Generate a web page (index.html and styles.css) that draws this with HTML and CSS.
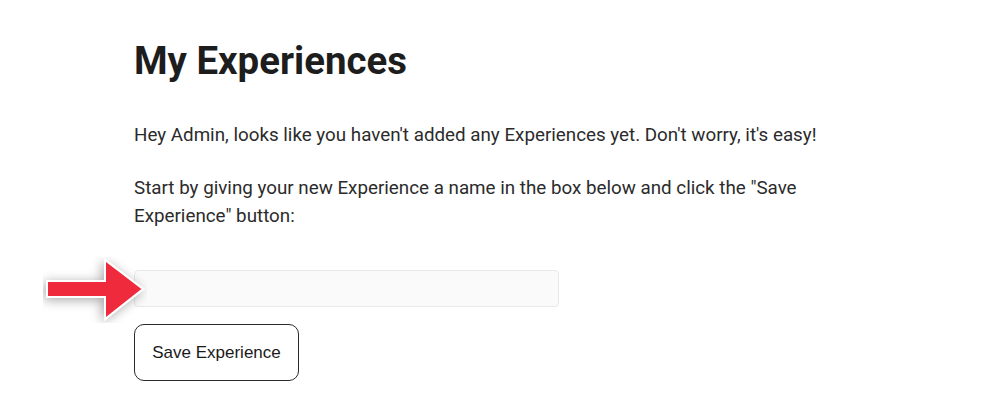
FILE: index.html
```html
<!DOCTYPE html>
<html lang="en">
<head>
  <meta charset="UTF-8">
  <title>My Experiences</title>
  <link rel="stylesheet" href="styles.css">
</head>
<body>
  <main class="page">
    <h1 class="page-title">My Experiences</h1>

    <p class="intro">Hey Admin, looks like you haven't added any Experiences yet. Don't worry, it's easy!</p>
    <p class="intro">Start by giving your new Experience a name in the box below and click the "Save Experience" button:</p>

    <form class="new-experience">
      <div class="field">
        <!-- Pointer arrow over the input -->
        <svg class="pointer" width="104" height="66" viewBox="0 0 104 66">
          <defs>
            <filter id="arrowShadow" x="-40%" y="-40%" width="180%" height="180%">
              <feGaussianBlur in="SourceAlpha" stdDeviation="6"/>
              <feOffset dx="-2" dy="2"/>
              <feComponentTransfer><feFuncA type="linear" slope="0.35"/></feComponentTransfer>
              <feMerge><feMergeNode/><feMergeNode in="SourceGraphic"/></feMerge>
            </filter>
          </defs>
          <path d="M4 24 L62 24 L62 3 L100 32 L62 62 L62 40 L4 40 Z" fill="#ef2b3c" stroke="#fff" stroke-width="2" stroke-linejoin="miter" filter="url(#arrowShadow)"/>
        </svg>
        <input type="text" class="name-input" name="experienceName">
      </div>
      <button type="submit" class="save-btn">Save Experience</button>
    </form>
  </main>
</body>
</html>
```

FILE: styles.css
```css
body {
  margin: 0;
  background: #ffffff;
  font-family: Roboto, "Liberation Sans", Arial, sans-serif;
  color: #222222;
}

.page {
  display: flex;
  flex-direction: column;
  align-items: flex-start;
  width: 700px;
  padding: 39px 0 0 134px;
}

.page-title {
  margin: 0 0 38px;
  font-size: 38.4px;
  line-height: 44px;
  font-weight: 700;
  color: #1d1d1d;
}

.intro {
  margin: 0 0 25px;
  font-size: 18.8px;
  line-height: 28px;
  color: #2b2b2b;
}

.new-experience {
  display: flex;
  flex-direction: column;
  align-items: flex-start;
  gap: 17px;
  margin-top: 15px;
}

.field {
  position: relative;
}

.pointer {
  position: absolute;
  left: -91px;
  top: -13px;
  z-index: 2;
}

.name-input {
  display: block;
  width: 425px;
  height: 37px;
  box-sizing: border-box;
  border: 1px solid #e8e8e8;
  border-radius: 4px;
  background: #fafafa;
}

.save-btn {
  width: 165px;
  height: 57px;
  background: #ffffff;
  border: 1px solid #2a2a2a;
  border-radius: 10px;
  font-family: "Liberation Sans", Arial, sans-serif;
  font-size: 17px;
  color: #1a1a1a;
  cursor: pointer;
}
```
